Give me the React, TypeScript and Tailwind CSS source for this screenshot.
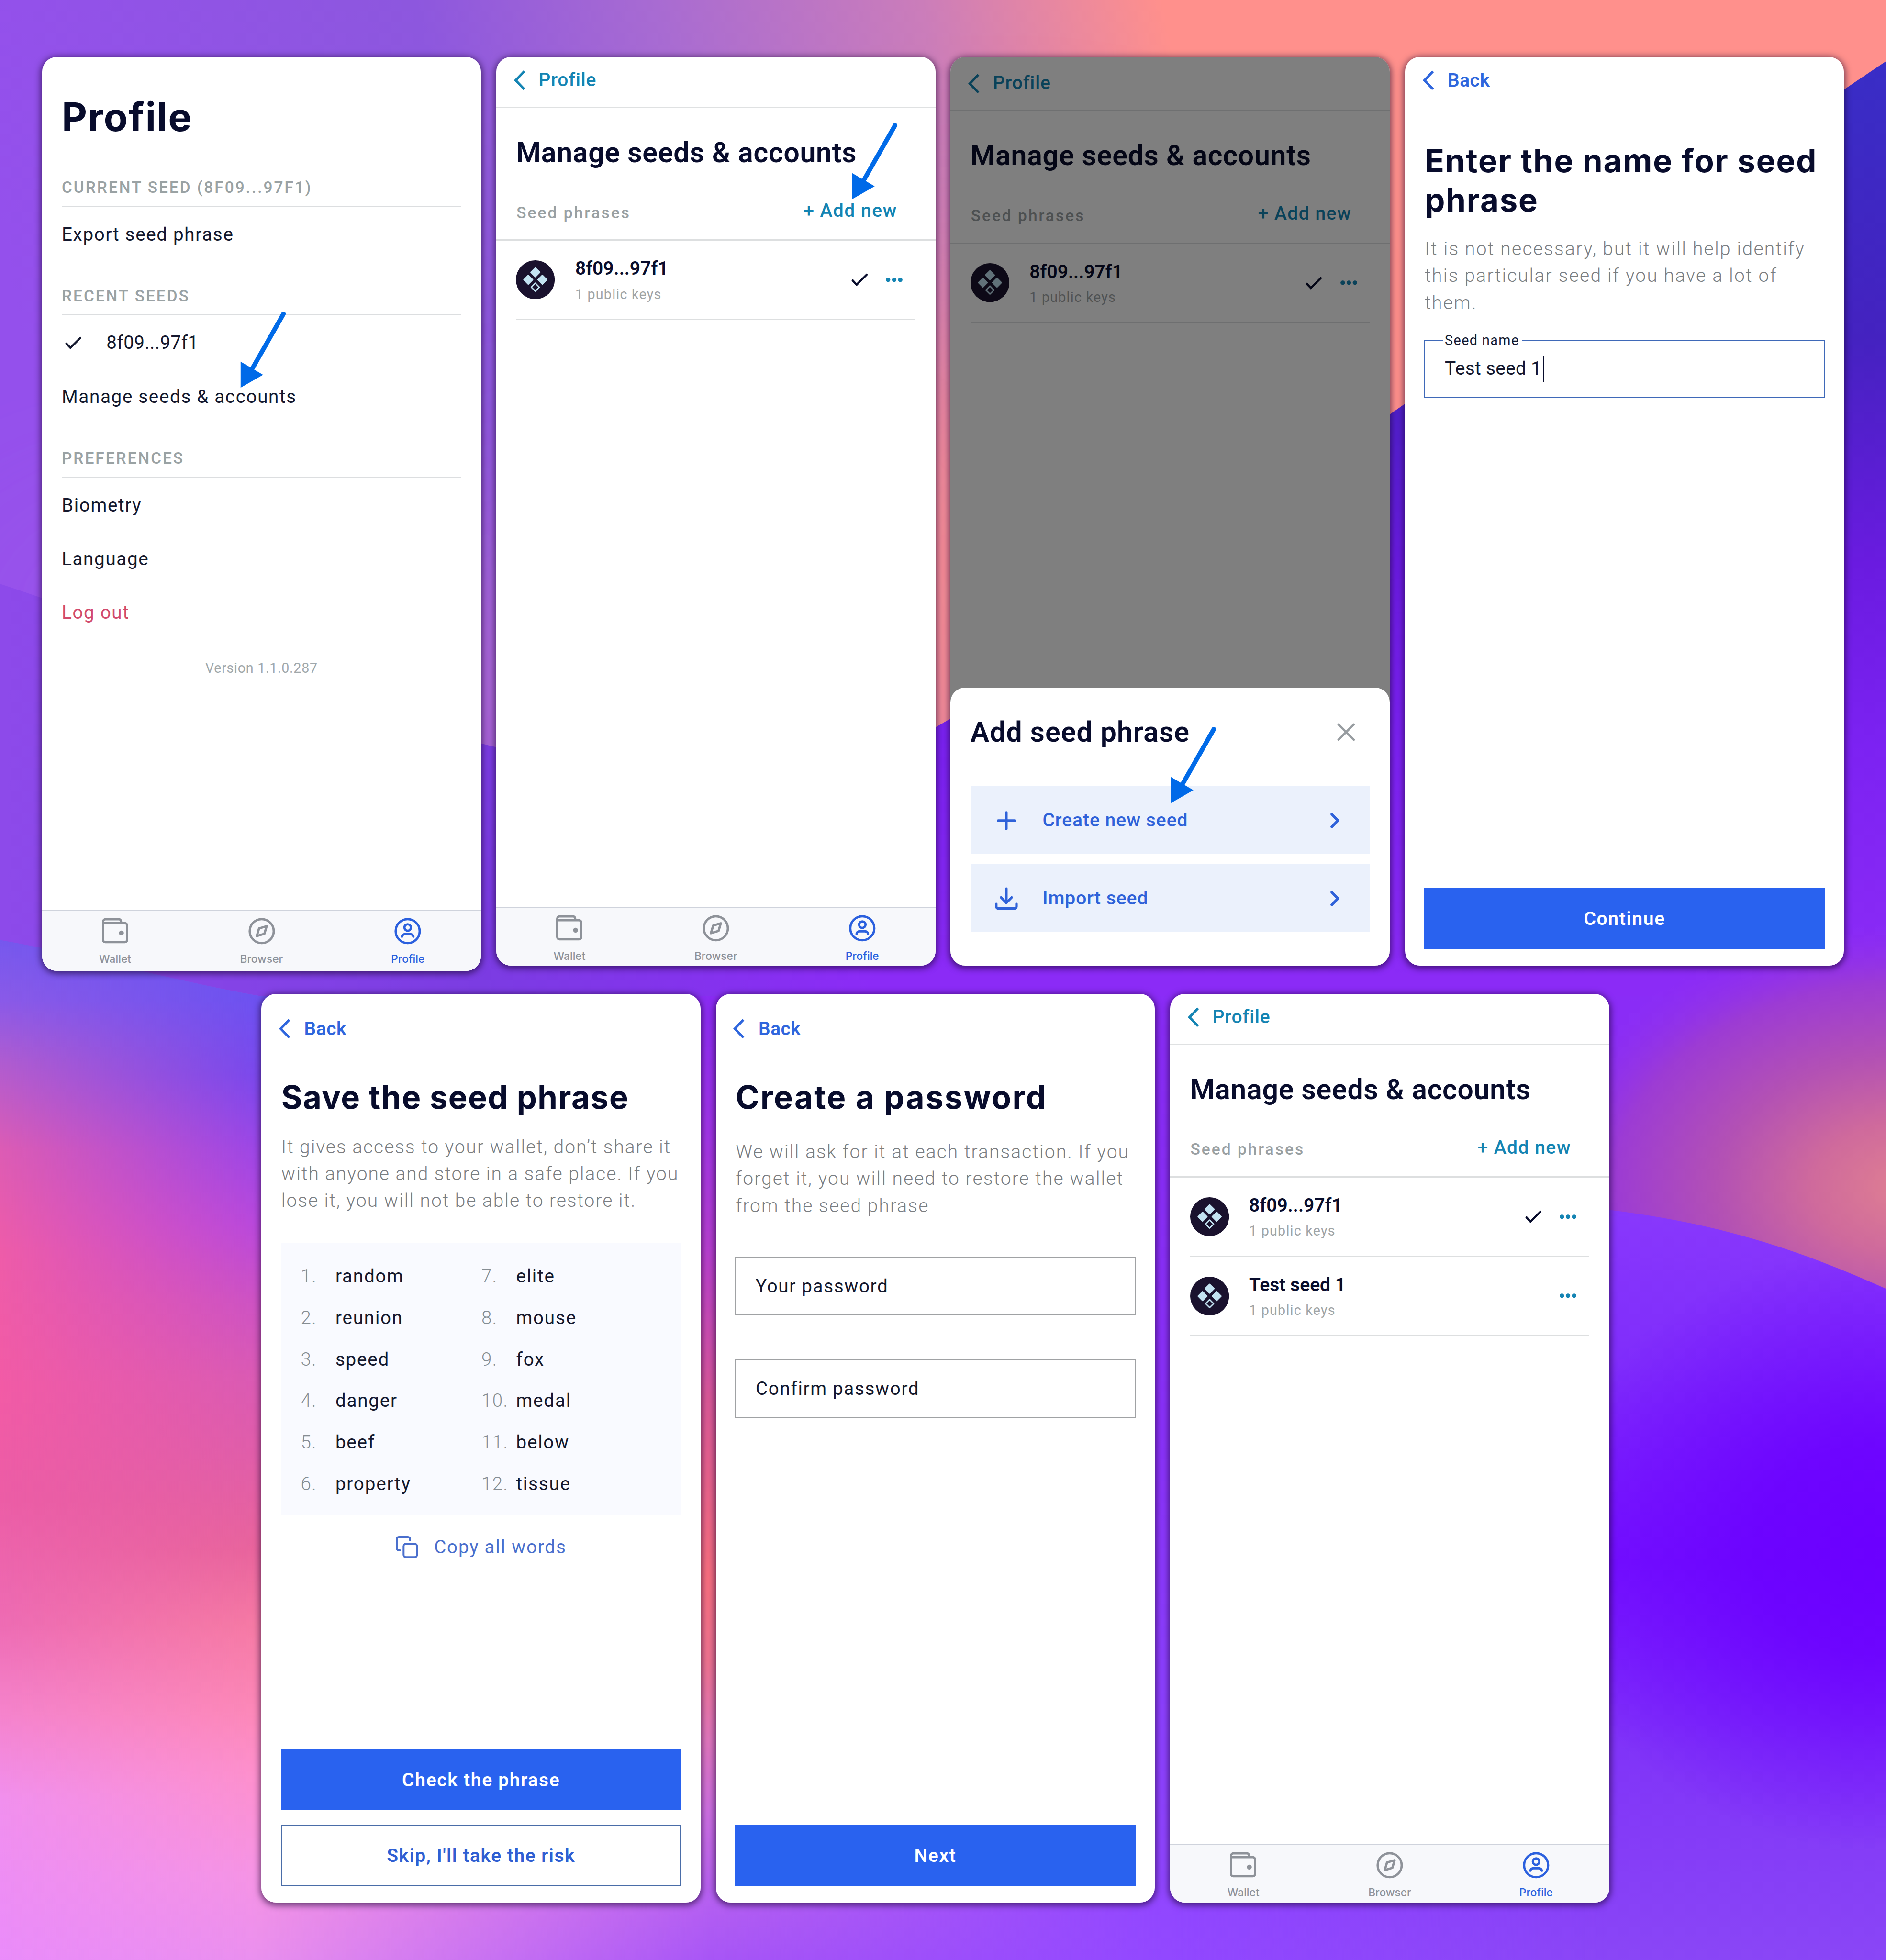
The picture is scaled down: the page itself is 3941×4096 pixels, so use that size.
import React from "react";
import type { ReactNode } from "react";

type Stop = [number, string];

const columns: { id: string; from: number; to: number; stops: Stop[] }[] = [
  {
    id: "c0",
    from: -2,
    to: -1,
    stops: [
      [750, "#7558ee"],
      [800, "#8a5ae8"],
      [850, "#b05cd0"],
      [920, "#dd5cb4"],
      [1000, "#ee5ca9"],
      [1110, "#f25ba6"],
      [1200, "#ec5da6"],
      [1300, "#ee6cb4"],
      [1370, "#f583cc"],
      [1440, "#f190ee"],
      [1568, "#ea8cfa"],
    ],
  },
  {
    id: "c1",
    from: 0,
    to: 209,
    stops: [
      [797, "#6c52f0"],
      [860, "#7a48ec"],
      [920, "#9c46e6"],
      [980, "#b848dc"],
      [1040, "#cc52c4"],
      [1100, "#d95ab4"],
      [1170, "#e05ea8"],
      [1240, "#e8649c"],
      [1300, "#f57aa4"],
      [1370, "#fc88b8"],
      [1420, "#fd90cc"],
      [1500, "#f594e4"],
      [1568, "#e98fee"],
    ],
  },
  {
    id: "c2",
    from: 209,
    to: 565,
    stops: [
      [797, "#8a2cf3"],
      [900, "#a035e8"],
      [1000, "#b840d0"],
      [1120, "#dc5a98"],
      [1262, "#fa7080"],
      [1330, "#f07492"],
      [1390, "#e278bc"],
      [1450, "#cd6fe2"],
      [1510, "#b862f0"],
      [1568, "#a856f6"],
    ],
  },
  {
    id: "c3",
    from: 565,
    to: 930,
    stops: [
      [797, "#8a2cf6"],
      [1150, "#8b32fa"],
      [1350, "#8d40ff"],
      [1568, "#9248ff"],
    ],
  },
];

function Wallpaper() {
  return (
    <svg
      className="absolute inset-0 h-full w-full"
      viewBox="0 0 1509 1568"
      preserveAspectRatio="none"
      aria-hidden="true"
    >
      <defs>
        <filter id="softer" x="-100%" y="-100%" width="300%" height="300%">
          <feGaussianBlur stdDeviation="95" />
        </filter>
        <linearGradient id="sky" gradientUnits="userSpaceOnUse" x1="0" y1="180" x2="930" y2="0">
          <stop offset="0" stopColor="#9450ec" />
          <stop offset="0.38" stopColor="#8d57de" />
          <stop offset="0.58" stopColor="#a86bd2" />
          <stop offset="0.8" stopColor="#cb7dba" />
          <stop offset="1" stopColor="#ff908c" />
        </linearGradient>
        <linearGradient id="night" gradientUnits="userSpaceOnUse" x1="0" y1="50" x2="0" y2="780">
          <stop offset="0" stopColor="#392dc6" />
          <stop offset="0.3" stopColor="#4422c0" />
          <stop offset="0.55" stopColor="#6a1be0" />
          <stop offset="0.75" stopColor="#7c22f2" />
          <stop offset="1" stopColor="#8b2bf6" />
        </linearGradient>
        <linearGradient id="leftband" gradientUnits="userSpaceOnUse" x1="0" y1="0" x2="700" y2="0">
          <stop offset="0" stopColor="#8d4aea" />
          <stop offset="0.55" stopColor="#7b3ce2" />
          <stop offset="1" stopColor="#7b3ce2" stopOpacity="0" />
        </linearGradient>
        <linearGradient id="rightwave" gradientUnits="userSpaceOnUse" x1="0" y1="967" x2="0" y2="1568">
          <stop offset="0" stopColor="#8838fc" />
          <stop offset="0.22" stopColor="#7f2cfb" />
          <stop offset="0.47" stopColor="#7412ff" />
          <stop offset="0.72" stopColor="#8034f8" />
          <stop offset="1" stopColor="#8a46f6" />
        </linearGradient>
        <radialGradient
          id="violet"
          gradientUnits="userSpaceOnUse"
          cx="0"
          cy="0"
          r="1"
          gradientTransform="translate(1500 1240) scale(270 240)"
        >
          <stop offset="0" stopColor="#6b00ff" />
          <stop offset="0.35" stopColor="#6b00ff" stopOpacity="0.85" />
          <stop offset="1" stopColor="#6b00ff" stopOpacity="0" />
        </radialGradient>
        <radialGradient
          id="dusk"
          gradientUnits="userSpaceOnUse"
          cx="0"
          cy="0"
          r="1"
          gradientTransform="translate(1525 950) scale(300 210)"
        >
          <stop offset="0" stopColor="#df7f92" />
          <stop offset="0.25" stopColor="#cf6a9c" />
          <stop offset="0.5" stopColor="#b351b4" />
          <stop offset="0.78" stopColor="#9c3bd4" />
          <stop offset="1" stopColor="#8f30ee" stopOpacity="0" />
        </radialGradient>
        <linearGradient id="fadewave" gradientUnits="userSpaceOnUse" x1="940" y1="0" x2="1285" y2="0">
          <stop offset="0" stopColor="#000" />
          <stop offset="1" stopColor="#fff" />
        </linearGradient>
        <mask id="wavemask" maskUnits="userSpaceOnUse" x="900" y="900" width="609" height="668">
          <rect x="900" y="900" width="609" height="668" fill="url(#fadewave)" />
        </mask>
        {columns.map((c) => (
          <React.Fragment key={c.id}>
            <linearGradient id={c.id} gradientUnits="userSpaceOnUse" x1="0" y1="750" x2="0" y2="1568">
              {c.stops.map(([y, color]) => (
                <stop key={y} offset={(y - 750) / 818} stopColor={color} />
              ))}
            </linearGradient>
            <linearGradient id={`${c.id}f`} gradientUnits="userSpaceOnUse" x1={c.from} y1="0" x2={c.to} y2="0">
              <stop offset="0" stopColor="#000" />
              <stop offset="1" stopColor="#fff" />
            </linearGradient>
            <mask id={`${c.id}m`} maskUnits="userSpaceOnUse" x="0" y="740" width="1509" height="828">
              <rect y="740" width="1509" height="828" fill={`url(#${c.id}f)`} />
            </mask>
          </React.Fragment>
        ))}
        <clipPath id="lowerleft">
          <path d="M0 752 C60 762 130 783 209 797 L1509 797 L1509 1568 L0 1568Z" />
        </clipPath>
        <clipPath id="skyclip">
          <path d="M0 0 H1509 V49 C1380 135 1250 235 1117 328 C1000 410 880 505 755 578 C650 640 520 628 390 596 C260 565 130 510 0 467Z" />
        </clipPath>
      </defs>
      <rect width="1509" height="1568" fill="url(#night)" />
      <rect width="700" height="800" fill="url(#leftband)" />
      <g clipPath="url(#lowerleft)">
        {columns.map((c) => (
          <rect key={c.id} y="740" width="1509" height="828" fill={`url(#${c.id})`} mask={`url(#${c.id}m)`} />
        ))}
      </g>
      <rect x="1200" y="700" width="309" height="340" fill="url(#dusk)" />
      <g mask="url(#wavemask)">
        <path d="M900 966 H1270 C1370 976 1440 1000 1509 1031 V1568 H900Z" fill="url(#rightwave)" />
        <path d="M1230 966 H1270 C1370 976 1440 1000 1509 1031 V1568 H1230Z" fill="url(#violet)" />
      </g>
      <g clipPath="url(#skyclip)">
        <rect width="1509" height="700" fill="url(#sky)" />
        <ellipse cx="120" cy="500" rx="150" ry="60" fill="#a158e8" filter="url(#softer)" />
        <ellipse cx="800" cy="500" rx="160" ry="260" fill="#ff8f8d" filter="url(#softer)" />
        <ellipse cx="500" cy="560" rx="130" ry="120" fill="#cc78c4" filter="url(#softer)" />
      </g>
    </svg>
  );
}

function Phone({ tall, children }: { tall?: boolean; children: ReactNode }) {
  return (
    <section
      className={`relative flex w-1152 shrink-0 flex-col overflow-hidden rounded-[31px] bg-white ${
        tall ? "h-2397" : "h-2384"
      }`}
    >
      {children}
    </section>
  );
}

function Frame({ children }: { children: ReactNode }) {
  return (
    <div className="shrink-0 self-start rounded-[31px] shadow-[0_3px_14px_3px_rgba(20,0,40,0.6)]">{children}</div>
  );
}

function Arrow({ className }: { className: string }) {
  return (
    <svg className={`absolute z-10 h-205 w-130 ${className}`} viewBox="0 0 130 205" aria-hidden="true">
      <path d="M118.5 8.5 38 150" stroke="#006ae8" strokeWidth="12" strokeLinecap="round" />
      <path d="M6 134V202.5L65 168.5Z" fill="#006ae8" />
    </svg>
  );
}

function ChevronLeft() {
  return (
    <svg className="h-52 w-30" viewBox="0 0 30 52" fill="none" stroke="currentColor" strokeWidth="6.5" aria-hidden="true">
      <path d="M27 2.5 4.5 26 27 49.5" />
    </svg>
  );
}

function ChevronRight() {
  return (
    <svg
      className="h-42 w-26"
      viewBox="0 0 26 42"
      fill="none"
      stroke="currentColor"
      strokeWidth="7"
      strokeLinecap="round"
      strokeLinejoin="round"
      aria-hidden="true"
    >
      <path d="M5 4.5 21 21 5 37.5" />
    </svg>
  );
}

function Check() {
  return (
    <svg className="h-34 w-44" viewBox="0 0 44 34" fill="none" stroke="currentColor" strokeWidth="5.5" strokeLinecap="round" aria-hidden="true">
      <path d="M3.5 19 14 30 40 4" />
    </svg>
  );
}

function Dots() {
  return (
    <svg className="h-12 w-44" viewBox="0 0 44 12" fill="currentColor" aria-hidden="true">
      <circle cx="6" cy="6" r="5.8" />
      <circle cx="22" cy="6" r="5.8" />
      <circle cx="38" cy="6" r="5.8" />
    </svg>
  );
}

function Coin() {
  return (
    <svg className="h-102 w-102 shrink-0" viewBox="0 0 102 102" aria-hidden="true">
      <circle cx="51" cy="51" r="51" fill="#1a122e" />
      <g fill="#c3e3f2" stroke="#c3e3f2" strokeWidth="3.5" strokeLinejoin="round">
        <path d="M51 20 62.500 31.500 51 43 39.500 31.500Z" />
        <path d="M32.500 39.500 44 51 32.500 62.500 21 51Z" />
        <path d="M69.500 39.500 81 51 69.500 62.500 58 51Z" />
        <path d="M51 60 61.500 70.500 51 81 40.500 70.500Z" fill="none" />
      </g>
    </svg>
  );
}

function WalletIcon() {
  return (
    <svg className="h-70 w-70" viewBox="0 0 70 70" fill="none" stroke="currentColor" strokeWidth="6" aria-hidden="true">
      <path d="M3 16V10a6 6 0 0 1 6-6h36a5 5 0 0 1 5 5v5" />
      <path d="M3 14H60a6 6 0 0 1 6 6V58a6 6 0 0 1-6 6H9a6 6 0 0 1-6-6Z" />
      <circle cx="51" cy="40" r="6.500" fill="currentColor" stroke="none" />
    </svg>
  );
}

function CompassIcon() {
  return (
    <svg className="h-70 w-70" viewBox="0 0 70 70" fill="none" stroke="currentColor" strokeWidth="6" strokeLinejoin="round" aria-hidden="true">
      <circle cx="35" cy="35" r="31.500" />
      <path d="M48 22 42 42 22 48 28 28Z" />
    </svg>
  );
}

function PersonIcon() {
  return (
    <svg className="h-70 w-70" viewBox="0 0 70 70" fill="none" stroke="currentColor" strokeWidth="6" strokeLinecap="round" aria-hidden="true">
      <circle cx="35" cy="35" r="31.500" />
      <circle cx="35" cy="25.500" r="8.500" />
      <path d="M20 49.500c1-4.500 4.500-6.500 8.500-6.500h13c4 0 7.500 2 8.500 6.500" />
    </svg>
  );
}

function TabBar({ className = "h-154" }: { className?: string }) {
  return (
    <nav
      className={`mt-auto flex border-t-[2px] border-[#cfd3dc] bg-[#f7f8fb] text-[22.7px] font-medium text-[#8e9299] ${className}`}
    >
      <div className="flex flex-1 flex-col items-center pt-18">
        <WalletIcon />
        <span className="mt-20 leading-36">Wallet</span>
      </div>
      <div className="flex flex-1 flex-col items-center pt-18">
        <CompassIcon />
        <span className="mt-20 leading-36">Browser</span>
      </div>
      <div className="flex flex-1 flex-col items-center pt-18 text-[#2b60de]">
        <PersonIcon />
        <span className="mt-20 leading-36">Profile</span>
      </div>
    </nav>
  );
}

function SectionTitle({ className, children }: { className: string; children: ReactNode }) {
  return (
    <h2
      className={`h-78 border-b-[2px] border-[#dcdee0] font-[Roboto] text-[33.5px] leading-54 font-medium tracking-[0.088em] text-[#9aa2a4] ${className}`}
    >
      {children}
    </h2>
  );
}

function Row({ className = "text-[#14182e]", children }: { className?: string; children: ReactNode }) {
  return (
    <div className={`flex h-141 items-center pt-4 font-[Roboto] text-[38.6px] leading-60 tracking-[0.043em] ${className}`}>
      {children}
    </div>
  );
}

function ProfileScreen() {
  return (
    <Phone tall>
      <div className="flex flex-col px-52 pt-97">
        <h1 className="text-[82px] leading-120 font-bold tracking-[0.02em] text-[#080c2c]">Profile</h1>
        <SectionTitle className="mt-97">CURRENT SEED (8F09...97F1)</SectionTitle>
        <Row>Export seed phrase</Row>
        <SectionTitle className="mt-66">RECENT SEEDS</SectionTitle>
        <Row className="pl-9 text-[#14182e]">
          <Check />
          <span className="ml-64 tracking-[0.012em]">8f09...97f1</span>
        </Row>
        <Row>Manage seeds &amp; accounts</Row>
        <SectionTitle className="mt-66">PREFERENCES</SectionTitle>
        <Row>Biometry</Row>
        <Row>Language</Row>
        <Row className="text-[#d24a6c]">Log out</Row>
        <p className="mt-54 text-center font-[Roboto] text-[28.7px] leading-46 tracking-[0.024em] text-[#a0a8ab]">
          Version 1.1.0.287
        </p>
      </div>
      <TabBar className="h-159" />
      <Arrow className="top-665 left-515" />
    </Phone>
  );
}

function SeedItem({ name, active }: { name: string; active?: boolean }) {
  return (
    <div className="mx-52 flex h-208 items-center border-b-[3px] border-[#dddfe0] font-[Roboto]">
      <Coin />
      <div className="ml-53 flex flex-1 flex-col pt-3">
        <span className="text-[39px] leading-60 font-semibold text-[#080c2c]">{name}</span>
        <span className="mt-13 text-[28.7px] leading-46 tracking-[0.042em] text-[#a0a4a6]">1 public keys</span>
      </div>
      {active && (
        <span className="text-[#080c2c]">
          <Check />
        </span>
      )}
      <span className="mr-34 ml-47 text-[#1484b3]">
        <Dots />
      </span>
    </div>
  );
}

function SeedList({ second }: { second?: boolean }) {
  return (
    <div className="flex flex-col font-[Roboto]">
      <div className="flex h-133 items-center gap-35 border-b-[2px] border-[#dfe1e2] pb-9 pl-46 text-[39px] font-medium tracking-[0.022em] text-[#1484b3]">
        <ChevronLeft />
        <span className="leading-60">Profile</span>
      </div>
      <h1 className="mt-72 px-52 text-[58.9px] leading-90 font-semibold tracking-[0.013em] text-[#080c2c]">
        Manage seeds &amp; accounts
      </h1>
      <div className="flex h-187 items-center justify-between border-b-[3px] border-[#dddfe0] pt-34 pr-100 pl-53">
        <span className="mt-8 text-[33.5px] leading-54 font-medium tracking-[0.09em] text-[#9aa0a2]">Seed phrases</span>
        <span className="text-[39px] leading-60 font-medium tracking-[0.038em] text-[#1484b3]">+ Add new</span>
      </div>
      <SeedItem name="8f09...97f1" active />
      {second && <SeedItem name="Test seed 1" />}
    </div>
  );
}

function ManageScreen({ arrow, second }: { arrow?: boolean; second?: boolean }) {
  return (
    <Phone>
      <SeedList second={second} />
      <TabBar />
      {arrow && <Arrow className="top-170 left-928" />}
    </Phone>
  );
}

function SheetRow({ icon, children }: { icon: ReactNode; children: ReactNode }) {
  return (
    <div className="flex h-179 items-center bg-[#ebf1fc] pt-3 pr-79 font-[Roboto] text-[39px] font-medium tracking-[0.025em] text-[#2f62d9]">
      <span className="flex w-189 justify-center">{icon}</span>
      <span className="flex-1 leading-60">{children}</span>
      <ChevronRight />
    </div>
  );
}

function AddSeedScreen() {
  return (
    <Phone>
      <div className="pt-8">
        <SeedList />
      </div>
      <div className="absolute inset-0 flex flex-col justify-end bg-black/50">
        <div className="h-730 rounded-t-[31px] bg-white px-52 pt-72">
          <div className="flex items-center justify-between pr-38">
            <h2 className="font-[Roboto] text-[58.9px] leading-90 font-semibold tracking-[0.019em] text-[#080c2c]">
              Add seed phrase
            </h2>
            <svg className="h-50 w-50" viewBox="0 0 50 50" stroke="#989da1" strokeWidth="6" strokeLinecap="round" aria-hidden="true">
              <path d="M5 5 45 45M45 5 5 45" />
            </svg>
          </div>
          <div className="mt-96 flex flex-col gap-26">
            <SheetRow
              icon={
                <svg className="h-50 w-50" viewBox="0 0 50 50" stroke="currentColor" strokeWidth="6.5" strokeLinecap="round" aria-hidden="true">
                  <path d="M25 3.500V46.500M3.500 25H46.500" />
                </svg>
              }
            >
              Create new seed
            </SheetRow>
            <SheetRow
              icon={
                <svg
                  className="h-60 w-60"
                  viewBox="0 0 60 60"
                  fill="none"
                  stroke="currentColor"
                  strokeWidth="6.5"
                  strokeLinecap="round"
                  strokeLinejoin="round"
                  aria-hidden="true"
                >
                  <path d="M30 4V41M16 27 30 41 44 27M3.500 44v7a5 5 0 0 0 5 5h43a5 5 0 0 0 5-5v-7" />
                </svg>
              }
            >
              Import seed
            </SheetRow>
          </div>
        </div>
      </div>
      <Arrow className="top-1754 left-572" />
    </Phone>
  );
}

function BackLink({ className }: { className: string }) {
  return (
    <div className={`flex h-60 items-center gap-36 pl-46 font-[Roboto] text-[38.8px] font-semibold tracking-[0.014em] text-[#2f66dd] ${className}`}>
      <ChevronLeft />
      <span className="leading-60">Back</span>
    </div>
  );
}

function Primary({ children }: { children: ReactNode }) {
  return (
    <button className="flex h-160 w-full items-center justify-center bg-[#2962ef] pt-3 font-[Roboto] text-[39px] leading-60 font-semibold tracking-[0.043em] text-white">
      {children}
    </button>
  );
}

const headingClass = "px-52 text-[66.9px] leading-103 font-bold whitespace-nowrap text-[#080c2c]";
const paragraphClass =
  "px-52 font-[Roboto] text-[39px] leading-[56.2px] font-light whitespace-nowrap text-[#7a7e82]";

function NameScreen() {
  return (
    <Phone>
      <BackLink className="mt-31" />
      <h1 className={`mt-129 tracking-[0.028em] ${headingClass}`}>
        Enter the name for seed
        <br />
        phrase
      </h1>
      <p className={`mt-42 tracking-[0.057em] ${paragraphClass}`}>
        It is not necessary, but it will help identify
        <br />
        this particular seed if you have a lot of
        <br />
        them.
      </p>
      <div className="relative mx-51 mt-62 flex h-153 items-center border-[2.500px] border-[#3f69b8] pl-51 font-[Roboto] text-[39px] leading-60 text-[#14182e]">
        <span className="tracking-[0.006em]">Test seed 1</span>
        <span className="ml-3 h-70 w-4 bg-[#080c2c]" />
        <span className="absolute -top-24 left-47 bg-white pr-8 pl-4 text-[28.7px] leading-46 tracking-[0.05em]">
          Seed name
        </span>
      </div>
      <div className="mt-auto px-51 pb-44">
        <Primary>Continue</Primary>
      </div>
    </Phone>
  );
}

const words = [
  ["random", "reunion", "speed", "danger", "beef", "property"],
  ["elite", "mouse", "fox", "medal", "below", "tissue"],
];

function PhraseScreen() {
  return (
    <Phone>
      <BackLink className="mt-61" />
      <h1 className={`mt-99 tracking-[0.02em] ${headingClass}`}>Save the seed phrase</h1>
      <p className={`mt-43 tracking-[0.05em] ${paragraphClass}`}>
        It gives access to your wallet, don’t share it
        <br />
        with anyone and store in a safe place. If you
        <br />
        lose it, you will not be able to restore it.
      </p>
      <div className="mx-51 mt-75 flex h-715 bg-[#f9faff] pt-34 pl-52">
        {words.map((list, c) => (
          <ol key={c} className="flex w-474 flex-col font-[Roboto] text-[38.6px] leading-[86.7px] tracking-[0.047em]">
            {list.map((w, i) => (
              <li key={w} className="flex text-[#14182e]">
                <span className="w-91 font-light tracking-[0.035em] text-[#868d93]">{c * 6 + i + 1}.</span>
                <span>{w}</span>
              </li>
            ))}
          </ol>
        ))}
      </div>
      <div className="mt-53 flex h-60 items-center justify-center gap-43 font-[Roboto] text-[38.6px] leading-60 tracking-[0.047em] text-[#4a6fcd]">
        <svg className="h-58 w-58" viewBox="0 0 58 58" fill="none" stroke="currentColor" strokeWidth="5" strokeLinecap="round" aria-hidden="true">
          <path d="M10.500 37.500H8a5.500 5.500 0 0 1-5.500-5.500V8A5.500 5.500 0 0 1 8 2.500h24a5.500 5.500 0 0 1 5.500 5.500v3" />
          <rect x="20.500" y="20.500" width="35" height="35" rx="6" />
        </svg>
        <span>Copy all words</span>
      </div>
      <div className="mt-auto flex flex-col gap-38 px-51 pb-44">
        <Primary>Check the phrase</Primary>
        <button className="flex h-160 items-center justify-center border-[2.500px] border-[#4a6da8] pt-3 font-[Roboto] text-[39px] leading-60 font-semibold tracking-[0.038em] text-[#2f5fd3]">
          Skip, I'll take the risk
        </button>
      </div>
    </Phone>
  );
}

function Field({ className, children }: { className: string; children: ReactNode }) {
  return (
    <div
      className={`mx-51 flex h-153 items-center border-[2.500px] border-[#a0a2a4] pl-51 font-[Roboto] text-[38.6px] leading-60 tracking-[0.043em] text-[#14182e] ${className}`}
    >
      {children}
    </div>
  );
}

function PasswordScreen() {
  return (
    <Phone>
      <BackLink className="mt-61" />
      <h1 className={`mt-99 tracking-[0.036em] ${headingClass}`}>Create a password</h1>
      <p className={`mt-56 tracking-[0.053em] ${paragraphClass}`}>
        We will ask for it at each transaction. If you
        <br />
        forget it, you will need to restore the wallet
        <br />
        from the seed phrase
      </p>
      <Field className="mt-100">Your password</Field>
      <Field className="mt-115">Confirm password</Field>
      <div className="mt-auto px-51 pb-44">
        <Primary>Next</Primary>
      </div>
    </Phone>
  );
}

export default function App() {
  return (
    <main className="relative h-[4096px] w-[3941px] overflow-hidden bg-[#8a2df7] font-[Inter] [--spacing:0.7965px]">
      <Wallpaper />
      <div className="relative flex flex-col pt-150">
        <div className="flex gap-40 pl-110">
          <Frame><ProfileScreen /></Frame>
          <Frame><ManageScreen arrow /></Frame>
          <Frame><AddSeedScreen /></Frame>
          <Frame><NameScreen /></Frame>
        </div>
        <div className="mt-61 flex gap-40 pl-686">
          <Frame><PhraseScreen /></Frame>
          <Frame><PasswordScreen /></Frame>
          <Frame><ManageScreen second /></Frame>
        </div>
      </div>
    </main>
  );
}
